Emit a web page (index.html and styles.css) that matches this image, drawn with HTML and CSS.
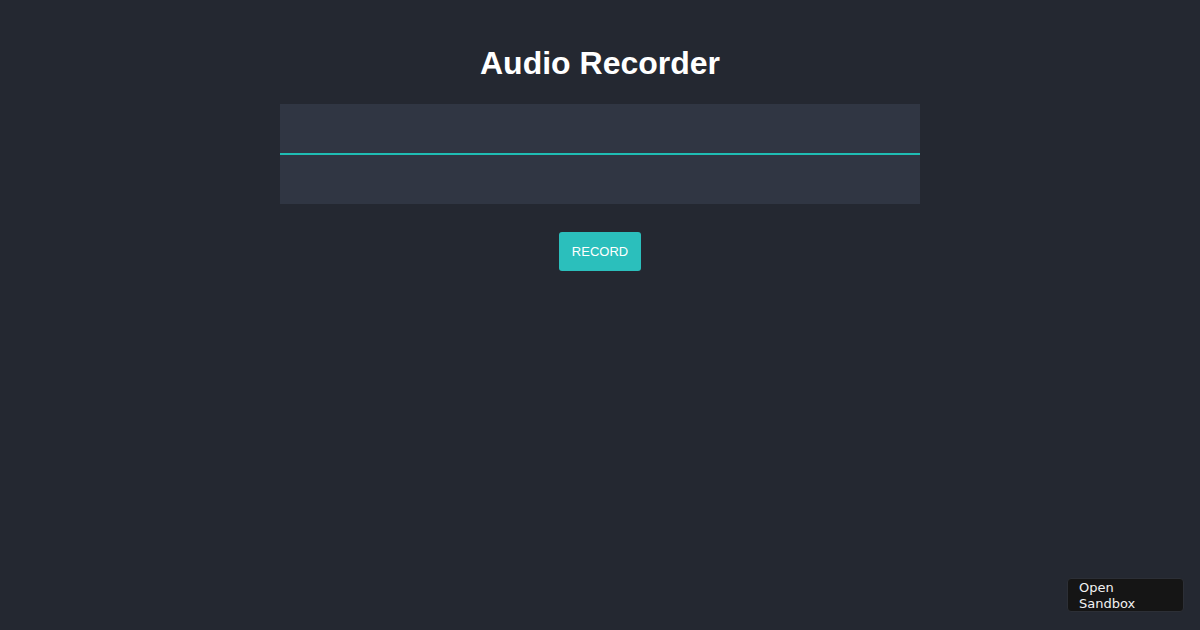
FILE: index.html
```html
<!DOCTYPE html>
<html lang="en">
<head>
<meta charset="utf-8">
<title>Audio Recorder</title>
<link rel="stylesheet" href="styles.css">
</head>
<body>
<main class="app">
  <h1 class="title">Audio Recorder</h1>
  <div class="visualizer"><div class="wave-line"></div></div>
  <button class="record-btn">RECORD</button>
</main>
<a class="sandbox-badge" href="#">Open Sandbox</a>
</body>
</html>
```

FILE: styles.css
```css
html, body {
  margin: 0;
  padding: 0;
  height: 100%;
}
body {
  background: #242831;
  font-family: "Liberation Sans", Arial, sans-serif;
  color: #fff;
}
.app {
  display: flex;
  flex-direction: column;
  align-items: center;
  padding-top: 45px;
}
.title {
  margin: 0 0 22px;
  font-size: 32px;
  line-height: 37px;
  font-weight: bold;
}
.visualizer {
  width: 640px;
  height: 100px;
  background: #303643;
  display: flex;
  align-items: center;
}
.wave-line {
  width: 100%;
  height: 2px;
  background: #1fbdb4;
}
.record-btn {
  margin-top: 28px;
  width: 82px;
  height: 39px;
  border: none;
  border-radius: 3px;
  background: #2bbfbc;
  color: #fff;
  font-family: "Liberation Sans", Arial, sans-serif;
  font-size: 13px;
  padding: 0;
}
.sandbox-badge {
  position: absolute;
  right: 16px;
  bottom: 18px;
  width: 117px;
  height: 34px;
  box-sizing: border-box;
  padding: 1px 24px 0 11px;
  background: #151515;
  border: 1px solid #2c2f36;
  border-radius: 4px;
  color: #f2f2f2;
  font-family: "DejaVu Sans", sans-serif;
  font-size: 13px;
  line-height: 16px;
  text-decoration: none;
}
```
